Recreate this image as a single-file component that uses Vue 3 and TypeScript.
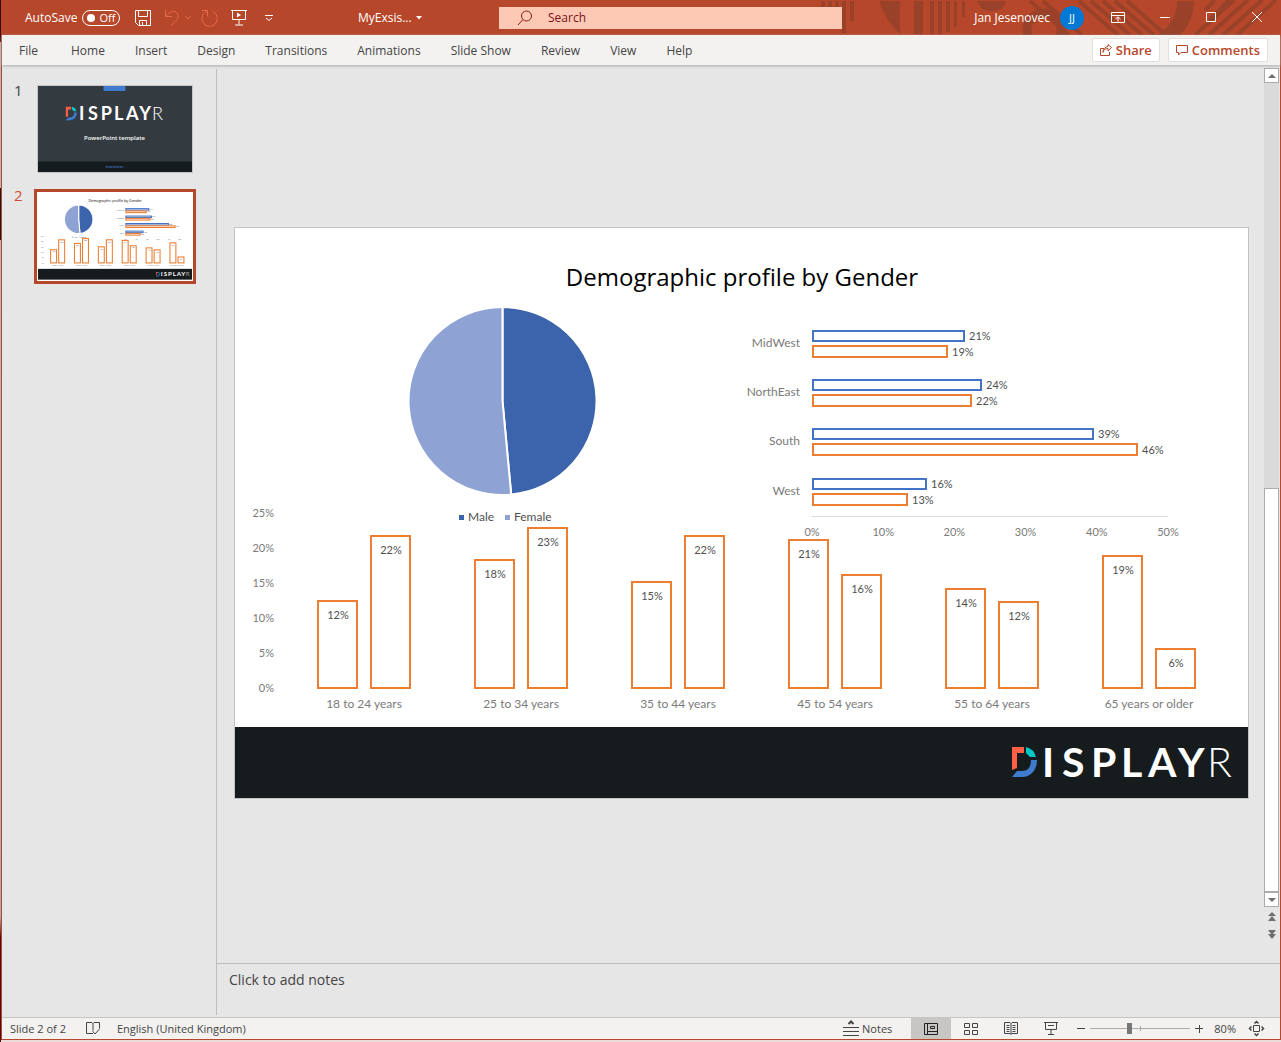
<script setup lang="ts">
import { ref } from 'vue'

interface Region { name: string; male: number; female: number; maleLabel: string; femaleLabel: string }
interface AgeGroup { name: string; bars: { value: number; label: string }[] }

const tabs = ['File', 'Home', 'Insert', 'Design', 'Transitions', 'Animations', 'Slide Show', 'Review', 'View', 'Help']

const regions: Region[] = [
  { name: 'MidWest', male: 21.3, female: 19, maleLabel: '21%', femaleLabel: '19%' },
  { name: 'NorthEast', male: 23.7, female: 22.3, maleLabel: '24%', femaleLabel: '22%' },
  { name: 'South', male: 39.5, female: 45.6, maleLabel: '39%', femaleLabel: '46%' },
  { name: 'West', male: 16, female: 13.4, maleLabel: '16%', femaleLabel: '13%' },
]

const ages: AgeGroup[] = [
  { name: '18 to 24 years', bars: [{ value: 12.5, label: '12%' }, { value: 21.8, label: '22%' }] },
  { name: '25 to 34 years', bars: [{ value: 18.4, label: '18%' }, { value: 23, label: '23%' }] },
  { name: '35 to 44 years', bars: [{ value: 15.3, label: '15%' }, { value: 21.8, label: '22%' }] },
  { name: '45 to 54 years', bars: [{ value: 21.2, label: '21%' }, { value: 16.2, label: '16%' }] },
  { name: '55 to 64 years', bars: [{ value: 14.2, label: '14%' }, { value: 12.3, label: '12%' }] },
  { name: '65 years or older', bars: [{ value: 19, label: '19%' }, { value: 5.6, label: '6%' }] },
]

const regionX = 577
const ageBase = 460
const regionLength = (value: number) => Math.round(value * 7.12)
const regionY = (i: number) => Math.round(102.7 + i * 49.3)
const ageX = (group: number, bar: number) => 83 + group * 157 + bar * 53
const ageHeight = (value: number) => Math.round(value * 6.96)

const zoom = ref(39)
const query = ref('')
</script>

<template>
  <div class="desktop">
    <div class="window">
      <header class="titlebar">
        <svg class="pattern" width="461" height="35" viewBox="-20 0 461 35" aria-hidden="true">
          <g fill="#9a4229">
            <path d="M-18 1h4v20h-4zM-11 1h4v20h-4zM-4 1h4v20h-4zM3 1h4v32H3zM11 1h4v20h-4zM40 1h21v33q-14-12-21-33zM75 1h9v33h-9zM91 1h4v33h-4zM99 1h4v33h-4zM107 1h4v31h-4zM115 1h3v26h-3zM123 1h3v16h-3zM138 1h29q-2 10-14 10T138 1z" />
            <path d="M338 1h17q0 20-14 34h-23q20-12 20-34z" />
          </g>
          <g fill="none" stroke="#9a4229">
            <circle cx="205" cy="30" r="17" stroke-width="9" />
            <path stroke-width="4" d="M191 1l39 34M204 1l39 34M240 1l39 34M252 1l39 34M264 1l39 34M276 1l39 34M288 1l39 34M366 10l10-10M371 20l19-20M356 35l39-35M370 35l39-35M384 35l39-35M398 35l39-35" />
          </g>
        </svg>
        <div class="quick">
          <label class="autosave">AutoSave
            <span class="switch"><input type="checkbox" aria-label="AutoSave" /><i></i><span>Off</span></span>
          </label>
          <button class="tool" aria-label="Save"><svg width="18" height="18" viewBox="0 0 18 18"><path d="M1.500 1.500h15v15h-12l-3-3zM4.500 1.500v6h9v-6M5.500 16.500v-5h7v5M8.500 13v3" /></svg></button>
          <button class="tool dim undo" aria-label="Undo"><svg width="28" height="18" viewBox="0 0 28 18"><path d="M1.500 1v6.500H8M1.500 7.500L6 3.500C9 1 14 2.500 14 7c0 3-2 5-7 9.500M21.500 7.500L24 10l2.500-2.500" /></svg></button>
          <button class="tool dim" aria-label="Redo"><svg width="18" height="18" viewBox="0 0 18 18"><path d="M1 1.500h5.500V7M12 2.700A7.700 7.700 0 1 1 4 3.500L6.500 1.500" /></svg></button>
          <button class="tool" aria-label="Start from beginning"><svg width="16" height="18" viewBox="0 0 16 18"><path d="M0 1.500h16M1.500 1.500v9h13v-9M8 10.500v5M4 16h8" /><path class="solid" d="M6 3.500v5L10 6z" /></svg></button>
          <button class="tool" aria-label="Customize toolbar"><svg width="8" height="8" viewBox="0 0 8 8"><path d="M0 1.500h8M1 4l3 2.500L7 4" /></svg></button>
        </div>
        <button class="docname">MyExsis... <svg width="6" height="4" viewBox="0 0 6 4"><path class="solid" d="M0 0h6L3 3.500z" /></svg></button>
        <label class="search">
          <svg width="16" height="16" viewBox="0 0 16 16"><circle cx="9.500" cy="6" r="5" /><path d="M6 9.500L1 15" /></svg>
          <input v-model="query" type="text" placeholder="Search" aria-label="Search" />
        </label>
        <div class="account">
          <span>Jan Jesenovec</span>
          <span class="avatar">JJ</span>
          <button class="tool" aria-label="Ribbon display options"><svg width="14" height="12" viewBox="0 0 14 12"><path d="M.5.5h13v10H.5zM.5 3.500h13M7 9.500V5M4.500 7L7 4.800 9.500 7" /></svg></button>
          <button class="tool" aria-label="Minimize"><svg width="12" height="12" viewBox="0 0 12 12"><path d="M1 5.500h10" /></svg></button>
          <button class="tool" aria-label="Maximize"><svg width="12" height="12" viewBox="0 0 12 12"><path d="M1.500.5h9v9h-9z" /></svg></button>
          <button class="tool" aria-label="Close"><svg width="12" height="12" viewBox="0 0 12 12"><path d="M1 0l10 10M11 0L1 10" /></svg></button>
        </div>
      </header>

      <nav class="ribbon">
        <button v-for="tab in tabs" :key="tab" class="tab">{{ tab }}</button>
        <span class="grow"></span>
        <button class="action"><svg width="12" height="12" viewBox="0 0 12 12"><path d="M4 4.500H.5v7h9V8M3 8.500c.5-3 2.500-4 5-4V7l3.500-3.500L8 .5v2C5 3 3 5 3 8.500" /></svg>Share</button>
        <button class="action"><svg width="12" height="12" viewBox="0 0 12 12"><path d="M.5 1.500h11v7H5L2.500 11V8.500h-2z" /></svg>Comments</button>
      </nav>

      <main class="workspace">
        <aside class="thumbs">
          <button class="thumb">
            <span class="num">1</span>
            <span class="frame">
              <svg class="mini" viewBox="0 0 155 87">
                <rect width="155" height="87" fill="#343b40" />
                <rect x="66" width="22" height="5" fill="#3f7bcf" />
                <use href="#displayr-logo" transform="translate(28 21) scale(.445)" />
                <text x="77" y="54" text-anchor="middle" class="mini-title">PowerPoint template</text>
                <rect y="76" width="155" height="11" fill="#161b1d" />
                <path d="M68 81.500h18" stroke="#3f7bcf" stroke-dasharray="3 .5" />
              </svg>
            </span>
          </button>
          <button class="thumb current">
            <span class="num">2</span>
            <span class="frame"><svg class="mini" viewBox="0 0 1013 570"><use href="#slide-art" /></svg></span>
          </button>
        </aside>

        <section class="editor">
          <div class="stage">
            <div class="canvas">
              <svg class="slide" viewBox="0 0 1013 570" role="img" aria-label="Demographic profile by Gender">
                <g id="slide-art">
                  <rect width="1013" height="570" fill="#fff" />
                  <text x="507" y="58" text-anchor="middle" class="title">Demographic profile by Gender</text>

                  <g stroke="#fff" class="pie">
                    <path fill="#3c64ac" d="M267.500 173V79a94 94 0 0 1 8.700 187.600z" />
                    <path fill="#8fa2d4" d="M267.500 173V79a94 94 0 1 0 8.700 187.600z" />
                  </g>
                  <rect x="224" y="287" width="5" height="5" fill="#3c64ac" />
                  <text x="233" y="293" class="label name">Male</text>
                  <rect x="270" y="287" width="5" height="5" fill="#8fa2d4" />
                  <text x="279" y="293" class="label name">Female</text>

                  <g v-for="(r, i) in regions" :key="r.name">
                    <text :x="regionX - 12" :y="regionY(i) + 16" text-anchor="end" class="label axis name">{{ r.name }}</text>
                    <rect :x="regionX + 1" :y="regionY(i)" :width="regionLength(r.male) - 1" height="10" class="bar male" />
                    <text :x="regionX + 5 + regionLength(r.male)" :y="regionY(i) + 9" class="label">{{ r.maleLabel }}</text>
                    <rect :x="regionX + 1" :y="regionY(i) + 15" :width="regionLength(r.female) - 1" height="11" class="bar" />
                    <text :x="regionX + 5 + regionLength(r.female)" :y="regionY(i) + 25" class="label">{{ r.femaleLabel }}</text>
                  </g>
                  <path d="M577 288.500h356" stroke="#d9d9d9" />
                  <text v-for="n in 6" :key="n" :x="regionX + (n - 1) * 71.200" y="308" text-anchor="middle" class="label axis">{{ n === 1 ? '0%' : (n - 1) * 10 + '%' }}</text>

                  <text v-for="n in 6" :key="'y' + n" x="39" :y="Math.floor(464 - (n - 1) * 34.900)" text-anchor="end" class="label axis">{{ (n - 1) * 5 }}%</text>
                  <g v-for="(g, i) in ages" :key="g.name">
                    <template v-for="(b, j) in g.bars" :key="j">
                      <rect :x="ageX(i, j)" :y="ageBase - ageHeight(b.value)" width="39" :height="ageHeight(b.value)" class="bar" />
                      <text :x="ageX(i, j) + 20" :y="ageBase - ageHeight(b.value) + 18" text-anchor="middle" class="label">{{ b.label }}</text>
                    </template>
                    <text :x="129 + i * 157" y="480" text-anchor="middle" class="label axis name">{{ g.name }}</text>
                  </g>

                  <rect y="499" width="1013" height="71" fill="#161b1d" />
                  <g transform="translate(777 519)">
                    <g id="displayr-logo">
                      <path fill="#ff5f46" d="M0 0h12v6H5v15l-5 2z" />
                      <path fill="#00c8c8" d="M14 0q8 2 10 10h-6l-4-4z" />
                      <path fill="#3f7bcf" d="M19 13h6c0 10-6 17-15 17H0l5-6h5c6 0 9-4 9-11z" />
                      <text x="30 50 79 109 136 166" y="30" class="wordmark">ISPLAY</text>
                      <text x="195" y="30" class="wordmark thin">R</text>
                    </g>
                  </g>
                </g>
              </svg>
            </div>
            <div class="scroll">
              <button class="scroll-btn" aria-label="Scroll up"><svg width="8" height="4" viewBox="0 0 8 4"><path d="M0 4h8L4 0z" /></svg></button>
              <div class="track"><div class="handle"></div></div>
              <button class="scroll-btn" aria-label="Scroll down"><svg width="8" height="4" viewBox="0 0 8 4"><path d="M0 0h8L4 4z" /></svg></button>
              <button class="page-btn" aria-label="Previous slide"><svg width="8" height="9" viewBox="0 0 8 9"><path d="M0 4h8L4 0zM0 9h8L4 4z" /></svg></button>
              <button class="page-btn" aria-label="Next slide"><svg width="8" height="9" viewBox="0 0 8 9"><path d="M0 0h8L4 5zM0 4h8L4 9z" /></svg></button>
            </div>
          </div>
          <div class="notes">Click to add notes</div>
        </section>
      </main>

      <footer class="status">
        <span>Slide 2 of 2</span>
        <button class="st proof" aria-label="Proofing"><svg width="14" height="14" viewBox="0 0 14 14"><path d="M7 11.500H.5v-11H6l1 1 1-1h5.500v6M7 1.500v7M6.500 9l2.500 3 4.500-5" /></svg></button>
        <span>English (United Kingdom)</span>
        <span class="grow"></span>
        <button class="st notes-btn"><svg width="16" height="16" viewBox="0 0 16 16"><path d="M0 6.500h16M0 10.500h16M0 14.500h16" /><path stroke-width="2" d="M5.500 3L8 .5 10.500 3" /></svg>Notes</button>
        <button class="st view active" aria-label="Normal view"><svg width="14" height="12" viewBox="0 0 14 12"><path d="M.5.5h13v11H.5zM3.500.5v11M3.500 8.500h10M6.500 3.500h4v2h-4z" /></svg></button>
        <button class="st view" aria-label="Slide sorter"><svg width="14" height="12" viewBox="0 0 14 12"><path d="M.5.5h5v4h-5zM8.500.5h5v4h-5zM.5 7.500h5v4h-5zM8.500 7.500h5v4h-5z" /></svg></button>
        <button class="st view" aria-label="Reading view"><svg width="14" height="13" viewBox="0 0 14 13"><path d="M.5.5H6l1 1 1-1h5.500v11H8l-1 1-1-1H.5zM7 1.500v11M2.500 3.500h3M2.500 5.500h3M2.500 7.500h3M2.500 9.500h3M8.500 3.500h3M8.500 5.500h3M8.500 7.500h3M8.500 9.500h3" /></svg></button>
        <button class="st view" aria-label="Slide show"><svg width="14" height="13" viewBox="0 0 14 13"><path d="M0 .5h14M1.500.5v7h11v-7M4 3.500h6M7 7.500v5M4 12.500h6" /></svg></button>
        <button class="st sign" aria-label="Zoom out"><svg width="8" height="8" viewBox="0 0 8 8"><path d="M0 3.500h8" /></svg></button>
        <input v-model="zoom" class="zoom" type="range" min="0" max="100" aria-label="Zoom" />
        <button class="st sign" aria-label="Zoom in"><svg width="8" height="8" viewBox="0 0 8 8"><path d="M0 3.500h8M4.500 0v8" /></svg></button>
        <span class="percent">80%</span>
        <button class="st fit" aria-label="Fit slide to window"><svg width="15" height="15" viewBox="0 0 15 15"><path d="M4.500 4.500h6v6h-6z" /><path stroke-width="1.500" d="M5.500 2.500l2-2 2 2M5.500 12.500l2 2 2-2M2.500 5.500l-2 2 2 2M12.500 5.500l2 2-2 2" /></svg></button>
      </footer>
    </div>
  </div>
</template>

<style>
body { margin: 0; }
</style>

<style scoped>
* { box-sizing: border-box; }
.desktop {
  min-height: 100vh;
  display: flex;
  padding: 0 0 2px 1px;
  background: linear-gradient(#3a0c08 4%, #b8b8b8 4%, #b8b8b8 18%, #151a1d 18%, #151a1d 23%, #b5b8ba 23%, #a9adb0 88%, #4a0d0d 90%);
  font-family: "Open Sans", "Noto Sans", sans-serif;
  font-size: 12px;
  color: #444;
}
.window {
  flex: 1;
  min-width: 0;
  display: flex;
  flex-direction: column;
  background: #e6e6e6;
  border: solid #b7472a;
  border-width: 0 1px 1px;
  box-shadow: 0 2px #ecdcd9;
}
button {
  display: flex;
  align-items: center;
  justify-content: center;
  margin: 0;
  padding: 0;
  border: 0;
  background: none;
  color: inherit;
  font: inherit;
}
svg { flex: none; display: block; overflow: visible; }
.grow { flex: 1; }

.titlebar {
  position: relative;
  display: grid;
  grid-template-columns: 356px 141px minmax(120px, 343px) 1fr;
  align-items: center;
  height: 35px;
  background: #b7472a;
  color: #fff;
}
.titlebar svg, .action svg, .status svg { fill: none; stroke: currentColor; }
.titlebar .pattern { position: absolute; right: 0; top: 0; stroke: none; overflow: hidden; }
.titlebar .solid { fill: currentColor; stroke: none; }
.quick { display: flex; align-items: center; padding-left: 23px; }
.autosave { display: flex; align-items: center; gap: 5px; margin-right: 14px; }
.switch {
  display: flex;
  align-items: center;
  justify-content: space-between;
  width: 38px;
  height: 16px;
  padding: 0 4px;
  border: 1px solid #fff;
  border-radius: 8px;
  font-size: 11px;
}
.switch input { position: absolute; width: 38px; height: 16px; margin: 0; opacity: 0; }
.switch i { width: 8px; height: 8px; border-radius: 4px; background: #fff; }
.quick .tool { margin-right: 12px; }
.quick .tool.undo { margin-right: 9px; }
.quick .tool:last-child { margin: 0 0 0 6px; }
.dim { color: #e5694c; }
.docname { justify-content: flex-start; gap: 4px; }
.search {
  position: relative;
  display: flex;
  align-items: center;
  gap: 15px;
  height: 22px;
  padding: 0 18px;
  background: #fdc9b5;
  color: #8b1a1a;
}
.search input { flex: 1; min-width: 0; padding: 0; border: 0; outline: 0; background: none; color: #7a1016; font: inherit; }
.search input::placeholder { color: #7a1016; opacity: 1; }
.account { position: relative; display: flex; align-items: center; justify-content: flex-end; padding-right: 17px; }
.avatar {
  display: flex;
  align-items: center;
  justify-content: center;
  width: 24px;
  height: 24px;
  margin: 0 27px 0 10px;
  border-radius: 12px;
  background: #0078d4;
  font-size: 11px;
}
.account .tool { margin-left: 34px; }
.account .avatar + .tool { margin-left: 0; }

.ribbon {
  position: relative;
  display: flex;
  align-items: center;
  height: 30px;
  padding: 0 12px 0 2px;
  background: #f3f2f1;
  box-shadow: 0 1px 3px #aaa;
  z-index: 1;
}
.tab { padding: 0 15px; }
.tab:first-child { padding-right: 18px; }
.action {
  gap: 4px;
  height: 24px;
  padding: 0 7px;
  margin-left: 8px;
  border: 1px solid #e1dfdd;
  border-radius: 2px;
  background: #fff;
  color: #b7472a;
  font-size: 13px;
  font-weight: 600;
}

.workspace { flex: 1; display: flex; min-height: 0; }
.thumbs { flex: none; width: 215px; margin: 4px 0 2px; padding: 12px 0 0 12px; border-right: 1px solid #bdbdbd; }
.thumb { align-items: flex-start; justify-content: flex-start; gap: 11px; margin-bottom: 10px; font-size: 15px; line-height: 18px; text-align: left; }
.num { width: 9px; }
.frame { display: block; width: 162px; margin-top: 1px; padding: 4px; }
.mini { width: 100%; outline: 1px solid #c6c6c6; --bar-stroke: 7px; --pie-stroke: 7px; }
.thumb.current { color: #d04a2b; }
.thumb.current .frame { margin-top: 3px; border: 3px solid #b7472a; padding: 1px; background: #fff; }
.thumb.current .mini { outline: 0; }
.mini-title { font-size: 6px; font-weight: 600; fill: #fff; }

.editor { flex: 1; min-width: 0; display: flex; flex-direction: column; }
.stage { flex: 1; display: flex; min-height: 0; }
.canvas { flex: 1; min-width: 0; display: flex; align-items: center; padding: 0 16px 2px 18px; }
.slide { width: 100%; outline: 1px solid #c3c3c3; overflow: hidden; }
.notes { height: 54px; padding: 6px 12px; border-top: 1px solid #bdbdbd; font-size: 14px; line-height: 20px; }

.title { font-size: 24px; fill: #000; }
.label { font-family: Lato, sans-serif; font-size: 11px; fill: #505050; }
.label.name { font-size: 12px; }
.label.axis { fill: #7a7a7a; }
.bar { fill: #fff; stroke: #ed7d31; stroke-width: var(--bar-stroke, 2px); }
.bar.male { stroke: #4472c4; }
.pie { stroke-width: var(--pie-stroke, 2px); }
.wordmark { font-family: Lato, sans-serif; font-size: 41px; font-weight: 700; fill: #fff; }
.wordmark.thin { font-weight: 300; }

.scroll { display: flex; flex-direction: column; align-items: center; width: 16px; padding: 3px 1px 20px 0; }
.scroll-btn { width: 15px; height: 15px; border: 1px solid #ababab; background: #fff; }
.scroll svg { fill: #6e6e6e; }
.track { flex: 1; display: flex; flex-direction: column; justify-content: flex-end; width: 15px; background: #dadada; }
.handle { height: 50%; border: 1px solid #ababab; background: #fff; }
.page-btn { width: 15px; height: 18px; }

.status {
  display: flex;
  align-items: center;
  height: 22px;
  padding: 0 16px 0 8px;
  border-top: 1px solid #c6c4c2;
  background: #f3f2f1;
  font-size: 11px;
}
.proof { margin: 0 17px 0 20px; }
.notes-btn { gap: 3px; margin-right: 19px; }
.view { width: 40px; height: 21px; }
.view.active { background: #c8c6c4; color: #222; }
.sign { margin-left: 6px; }
.zoom + .sign { margin-left: 5px; }
.zoom {
  appearance: none;
  width: 100px;
  height: 12px;
  margin: 0 0 0 5px;
  background: linear-gradient(#aaa, #aaa) center / 100% 1px no-repeat, linear-gradient(#aaa, #aaa) center / 1px 5px no-repeat;
}
.zoom::-webkit-slider-thumb { appearance: none; width: 5px; height: 11px; background: #777; }
.percent { margin: 0 13px 0 11px; }
</style>
